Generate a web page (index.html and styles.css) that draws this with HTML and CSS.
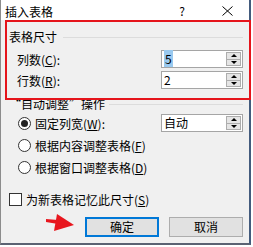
FILE: index.html
```html
<!DOCTYPE html>
<html lang="zh-CN">
<head>
    <meta charset="UTF-8">
    <meta name="viewport" content="width=device-width, initial-scale=1.0">
    <title>插入表格</title>
    <link rel="stylesheet" href="styles.css">
</head>
<body>
    <div class="dialog">
        <div class="titlebar">
            <span class="title">插入表格</span>
            <span class="help">?</span>
            <svg class="close" width="11" height="10" viewBox="0 0 11 10">
                <path d="M0.5 0.5 L10.5 9.5 M10.5 0.5 L0.5 9.5" stroke="#000" stroke-width="1" fill="none"/>
            </svg>
        </div>

        <div class="content">
            <!-- Table size -->
            <div class="group-head">
                <span>表格尺寸</span>
                <div class="rule"></div>
            </div>
            <div class="field">
                <label>列数(<u>C</u>):</label>
                <div class="spin">
                    <span class="value"><span class="selected">5</span></span>
                    <div class="arrows">
                        <span class="up"></span>
                        <span class="down"></span>
                    </div>
                </div>
            </div>
            <div class="field second">
                <label>行数(<u>R</u>):</label>
                <div class="spin">
                    <span class="value">2</span>
                    <div class="arrows">
                        <span class="up"></span>
                        <span class="down"></span>
                    </div>
                </div>
            </div>

            <!-- Autofit -->
            <div class="group-head lower">
                <span>“自动调整”操作</span>
                <div class="rule"></div>
            </div>
            <div class="option">
                <span class="radio checked"></span>
                <span>固定列宽(<u>W</u>):</span>
                <div class="spin">
                    <span class="value">自动</span>
                    <div class="arrows">
                        <span class="up"></span>
                        <span class="down"></span>
                    </div>
                </div>
            </div>
            <div class="option">
                <span class="radio"></span>
                <span>根据内容调整表格(<u>F</u>)</span>
            </div>
            <div class="option">
                <span class="radio"></span>
                <span>根据窗口调整表格(<u>D</u>)</span>
            </div>

            <div class="remember">
                <span class="checkbox"></span>
                <span>为新表格记忆此尺寸(<u>S</u>)</span>
            </div>

            <div class="buttons">
                <button class="btn default">确定</button>
                <button class="btn">取消</button>
            </div>
        </div>
    </div>

    <!-- annotations drawn over the screenshot -->
    <div class="mark-box"></div>
    <svg class="mark-arrow" width="32" height="24" viewBox="0 0 32 24">
        <polygon points="2,9 14,10 14,14 2,12" fill="#e8161e"/>
        <polygon points="13,4 10,21 30,15" fill="#e8161e"/>
    </svg>
</body>
</html>
```

FILE: styles.css
```css
body {
    margin: 0;
    background: #fff;
    font-family: "Noto Sans CJK SC", "Liberation Sans", sans-serif;
    font-size: 12px;
    color: #000;
    position: relative;
    width: 253px;
    height: 247px;
    overflow: hidden;
}
u {
    text-decoration: underline;
    text-underline-offset: 1px;
}
.dialog {
    width: 248px;
    height: 243px;
    border-left: 1px solid #8c8c8c;
    border-right: 2px solid #435b7d;
    border-bottom: 2px solid #5b6272;
    display: flex;
    flex-direction: column;
}
.titlebar {
    height: 20px;
    background: #fff;
    display: flex;
    align-items: center;
    padding-left: 4px;
    padding-right: 16px;
    box-sizing: border-box;
}
.title {
    line-height: 16px;
    margin-top: 3px;
}
.help {
    margin-left: auto;
    margin-right: 37px;
    line-height: 16px;
    margin-top: 2px;
}
.close {
    margin-top: 2px;
}
.content {
    flex: 1;
    background: #f0f0f0;
    padding: 9px 6px 0 8px;
    display: flex;
    flex-direction: column;
}
.group-head {
    display: flex;
    align-items: center;
    height: 16px;
    line-height: 16px;
    gap: 6px;
}
.group-head.lower {
    margin-top: 7px;
    gap: 4px;
}
.rule {
    flex: 1;
    height: 1px;
    background: #dcdcdc;
    margin-top: 1px;
}
.field {
    display: flex;
    align-items: center;
    height: 18px;
    margin-top: 5px;
    padding-left: 8px;
}
.field.second {
    margin-top: 3px;
}
.spin {
    margin-left: auto;
    width: 82px;
    height: 18px;
    box-sizing: border-box;
    border: 1px solid #a5a5a5;
    background: #fff;
    display: flex;
    align-items: center;
    padding: 1px 1px 1px 2px;
}
.value {
    flex: 1;
    line-height: 14px;
}
.selected {
    background: #99c9ef;
    padding: 0 1px;
}
.arrows {
    width: 15px;
    height: 14px;
    box-sizing: border-box;
    border: 1px solid #adadad;
    background: #e5e5e5;
    display: flex;
    flex-direction: column;
}
.arrows span {
    flex: 1;
    display: flex;
    align-items: center;
    justify-content: center;
}
.arrows .up {
    border-bottom: 1px solid #adadad;
}
.arrows .up::after {
    content: "";
    border-left: 3px solid transparent;
    border-right: 3px solid transparent;
    border-bottom: 3px solid #000;
}
.arrows .down::after {
    content: "";
    border-left: 3px solid transparent;
    border-right: 3px solid transparent;
    border-top: 3px solid #000;
}
.option {
    display: flex;
    align-items: center;
    height: 22px;
    padding-left: 9px;
    gap: 4px;
}
.radio {
    width: 13px;
    height: 13px;
    box-sizing: border-box;
    border: 1px solid #333;
    border-radius: 50%;
    background: #fff;
    display: flex;
    align-items: center;
    justify-content: center;
}
.radio.checked::after {
    content: "";
    width: 7px;
    height: 7px;
    border-radius: 50%;
    background: #222;
}
.remember {
    display: flex;
    align-items: center;
    height: 16px;
    margin-top: 13px;
    gap: 4px;
}
.checkbox {
    width: 13px;
    height: 13px;
    box-sizing: border-box;
    border: 1px solid #333;
    background: #fff;
}
.buttons {
    display: flex;
    gap: 10px;
    margin-top: 10px;
    padding-left: 76px;
}
.btn {
    width: 74px;
    height: 20px;
    box-sizing: border-box;
    border: 1px solid #adadad;
    background: #e1e1e1;
    font-family: inherit;
    font-size: 12px;
    padding: 0;
    line-height: 16px;
}
.btn.default {
    border: 2px solid #0078d7;
}
.mark-box {
    position: absolute;
    left: 5px;
    top: 20px;
    width: 246px;
    height: 80px;
    box-sizing: border-box;
    border: 2px solid #e5141b;
}
.mark-arrow {
    position: absolute;
    left: 44px;
    top: 210px;
}
```
